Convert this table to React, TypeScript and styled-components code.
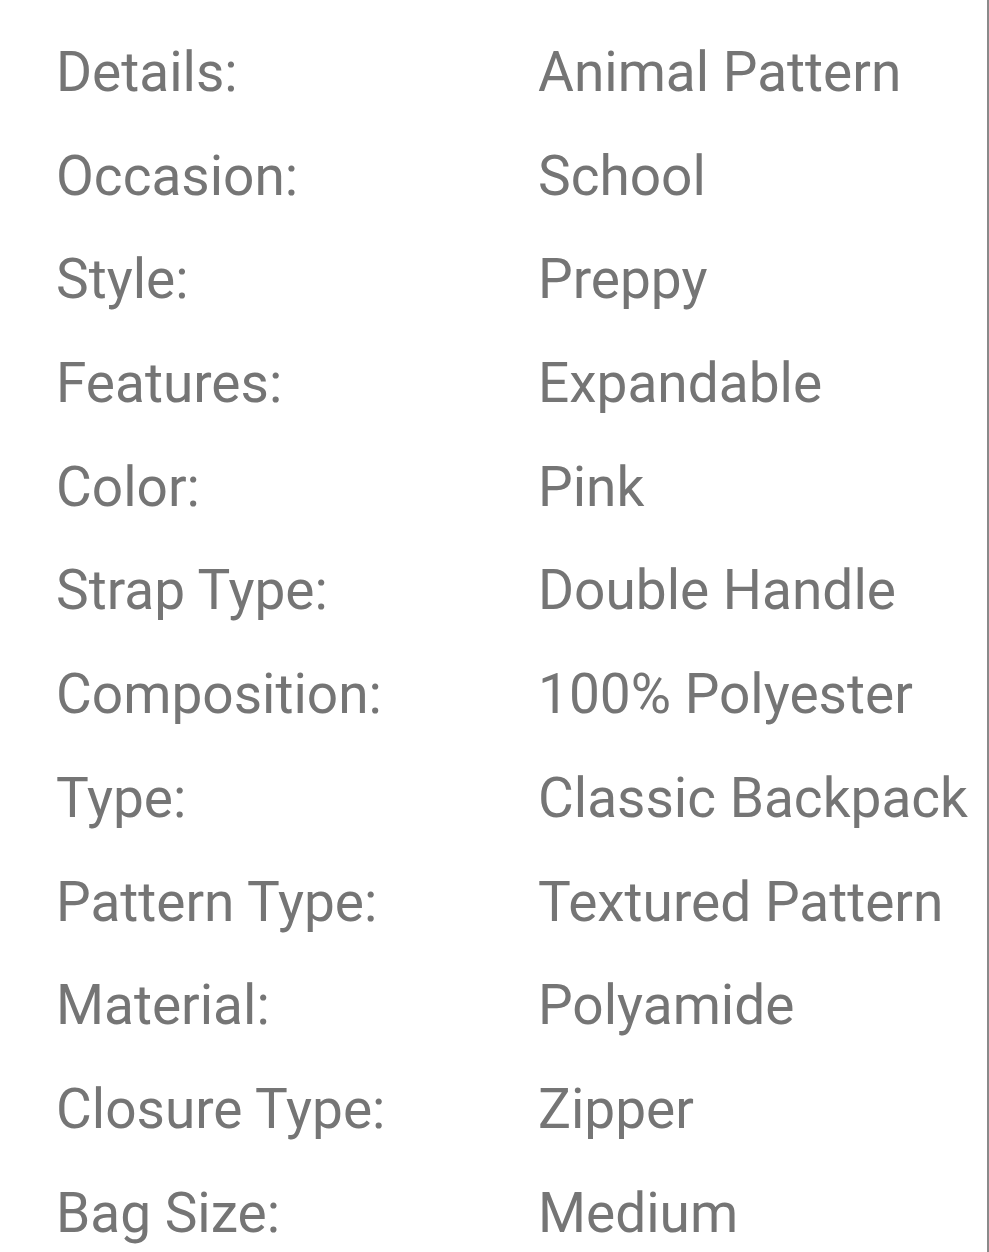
import React from "react";
import styled, { createGlobalStyle } from "styled-components";

const Global = createGlobalStyle`
  html, body { margin: 0; padding: 0; background: #ffffff; }
  body { font-family: Roboto, "Noto Sans", sans-serif; }
`;

const Page = styled.div`
  width: 987px;
  height: 1252px;
  border-right: 2px solid #8a8a8a;
  background: #ffffff;
  overflow: hidden;
`;

const Specs = styled.dl`
  margin: 0;
  padding: 21px 0 0 56px;
  display: grid;
  grid-template-columns: 482px 1fr;
  grid-auto-rows: 103.7px;
  align-items: center;
`;

const Label = styled.dt`
  margin: 0;
  font-size: 55px;
  line-height: 103.7px;
  color: #757575;
  white-space: nowrap;
`;

const Value = styled.dd`
  margin: 0;
  font-size: 55px;
  line-height: 103.7px;
  color: #757575;
  white-space: nowrap;
`;

const rows: [string, string][] = [
  ["Details:", "Animal Pattern"],
  ["Occasion:", "School"],
  ["Style:", "Preppy"],
  ["Features:", "Expandable"],
  ["Color:", "Pink"],
  ["Strap Type:", "Double Handle"],
  ["Composition:", "100% Polyester"],
  ["Type:", "Classic Backpack"],
  ["Pattern Type:", "Textured Pattern"],
  ["Material:", "Polyamide"],
  ["Closure Type:", "Zipper"],
  ["Bag Size:", "Medium"],
];

export default function App() {
  return (
    <>
      <Global />
      <Page>
        <Specs>
          {rows.map(([k, v]) => (
            <React.Fragment key={k}>
              <Label>{k}</Label>
              <Value>{v}</Value>
            </React.Fragment>
          ))}
        </Specs>
      </Page>
    </>
  );
}
